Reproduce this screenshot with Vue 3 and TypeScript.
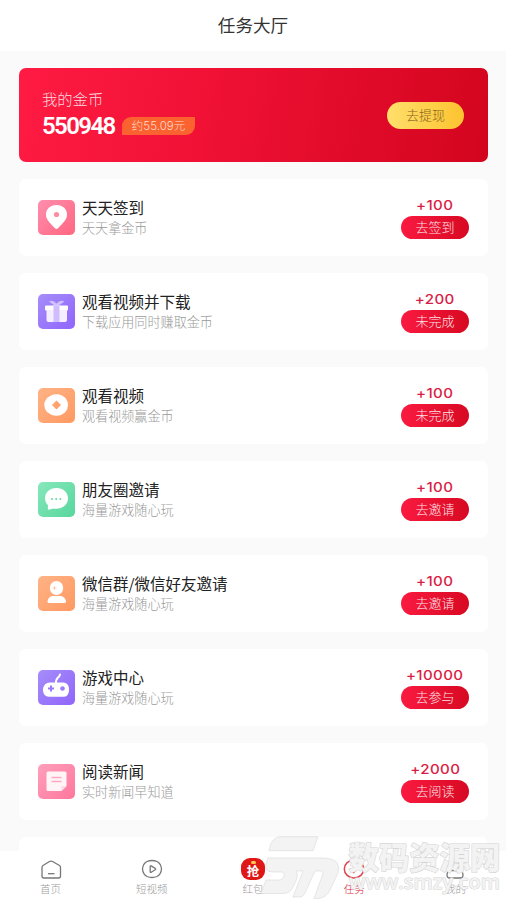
<script setup lang="ts">
interface Task {
  title: string
  desc: string
  reward: string
  action: string
  icon: 'pin' | 'gift' | 'coin' | 'chat' | 'user' | 'game' | 'news'
  tone: 'pink' | 'purple' | 'orange' | 'green' | 'rose'
}

const tasks: Task[] = [
  { title: '天天签到', desc: '天天拿金币', reward: '+100', action: '去签到', icon: 'pin', tone: 'pink' },
  { title: '观看视频并下载', desc: '下载应用同时赚取金币', reward: '+200', action: '未完成', icon: 'gift', tone: 'purple' },
  { title: '观看视频', desc: '观看视频赢金币', reward: '+100', action: '未完成', icon: 'coin', tone: 'orange' },
  { title: '朋友圈邀请', desc: '海量游戏随心玩', reward: '+100', action: '去邀请', icon: 'chat', tone: 'green' },
  { title: '微信群/微信好友邀请', desc: '海量游戏随心玩', reward: '+100', action: '去邀请', icon: 'user', tone: 'orange' },
  { title: '游戏中心', desc: '海量游戏随心玩', reward: '+10000', action: '去参与', icon: 'game', tone: 'purple' },
  { title: '阅读新闻', desc: '实时新闻早知道', reward: '+2000', action: '去阅读', icon: 'news', tone: 'rose' },
]
</script>

<template>
  <div class="page">
    <header class="header">任务大厅</header>

    <main class="content">
      <section class="wallet">
        <div>
          <div class="wallet-label">我的金币</div>
          <div class="wallet-row">
            <span class="balance">550948</span>
            <span class="approx">约55.09元</span>
          </div>
        </div>
        <button class="withdraw">去提现</button>
      </section>

      <article v-for="t in tasks" :key="t.title" class="card">
        <div class="icon" :class="t.tone">
          <svg viewBox="0 0 37 35" width="37" height="35">
            <template v-if="t.icon === 'pin'">
              <path d="M18.500 5C12 5 8 9.300 8 14.500c0 6 5.300 9.500 9 13.700q1.500 1.600 3 0c3.700-4.200 9-7.700 9-13.700C29 9.300 25 5 18.500 5z" fill="#fff" />
              <circle cx="18.500" cy="14.500" r="2.600" fill="#ff8ba0" />
            </template>
            <template v-else-if="t.icon === 'gift'">
              <path d="M17 12 11 7.500q4-2 7.500 2 3.500-4 8-2L20 12z" fill="#cfc0ff" />
              <rect x="7" y="11.500" width="23" height="5" rx="1" fill="#fff" />
              <path d="M8.500 16h20.500v10q0 2-2 2H10.500q-2 0-2-2z" fill="#f4eeff" />
              <path d="M15.500 11.500h6V28h-6z" fill="#d0bdff" />
            </template>
            <template v-else-if="t.icon === 'coin'">
              <path d="M13 7.500Q18.500 5 24 7.500l3.500 2.500q5 7 0 14L24 26.500q-5.500 2.500-11 0L9 24q-5.500-7 0-14z" fill="#fff" />
              <path d="m18.500 12.500 4.500 4.500-4.500 4.500L14 17z" fill="#ffa26d" />
            </template>
            <template v-else-if="t.icon === 'chat'">
              <path d="M18.500 6C11.700 6 7 10.500 7 16.300c0 3 1.300 5.200 3 7l-.2 3.500q.2 1 1.500.8l4.200-1C23.500 28 30 23 30 16.300 30 10.500 25.300 6 18.500 6z" fill="#fff" />
              <g fill="#62d9a8"><circle cx="14" cy="17" r="1" /><circle cx="18.200" cy="17" r="1" /><circle cx="22.400" cy="17" r="1" /></g>
            </template>
            <template v-else-if="t.icon === 'user'">
              <ellipse cx="18.500" cy="12" rx="6.700" ry="7" fill="#fff" />
              <path d="M14 20h9q4.500 1.200 5 5.500 0 1.500-2 1.500H11.500q-2 0-2-1.500 .5-4.300 4.500-5.500z" fill="#fff" />
              <path d="M14.800 12h3.400M16.500 10.300v3.400" stroke="#ffc7a4" />
            </template>
            <template v-else-if="t.icon === 'game'">
              <path d="M18 14q-.5-4 2-6.500 1.500-1 2-3" fill="none" stroke="#fff" stroke-width="2" stroke-linecap="round" />
              <path d="M12 12.500h13c4 0 6 3 6 7s-1.500 7.200-5 7.200H11c-4 0-6-3-6-7s3-7.200 7-7.200z" fill="#fff" />
              <path d="M10 18.500h6M13 15.500v6" stroke="#9b7cf9" stroke-width="2" />
              <circle cx="24.500" cy="18.500" r="2.300" fill="#9b7cf9" />
            </template>
            <template v-else>
              <path d="M10 7.500h17q1.500 0 1.500 1.500v13l-5 5H10q-1.500 0-1.500-1.500V9q0-1.500 1.500-1.500z" fill="#fff5f7" />
              <path d="M13.500 13.500h10M13.500 17.500h10" stroke="#ffaac1" stroke-width="1.500" />
              <path d="M28.500 22h-4q-1 0-1 1v4z" fill="#ffdce5" />
            </template>
          </svg>
        </div>
        <div class="info">
          <h2>{{ t.title }}</h2>
          <p>{{ t.desc }}</p>
        </div>
        <div class="side">
          <span class="reward">{{ t.reward }}</span>
          <button class="action">{{ t.action }}</button>
        </div>
      </article>
      <article class="card"></article>
    </main>

    <nav class="tabs">
      <div class="tab">
        <svg viewBox="0 0 24 24" width="24" height="24" fill="none" stroke="#777" stroke-width="1.300">
          <path d="M4 7.500q-1 .6-1 2V18q0 2 2 2h14.500q2 0 2-2V9.500q0-1.400-1-2l-7-4q-1.500-.9-3 0z" /><path d="M9 15.700h6.500" />
        </svg>
        <span>首页</span>
      </div>
      <div class="tab">
        <svg viewBox="0 0 24 24" width="24" height="24" fill="none" stroke="#777" stroke-width="1.300" stroke-linejoin="round">
          <path d="M7 3.500q5-2 10 0 4 2 4.500 7.500-.5 5.500-4.500 7.500-5 2-10 0-4-2-4.500-7.500.5-5.500 4.500-7.500z" /><path d="M10.200 8.500q0-1 1-.6l4 2.500q.9.700 0 1.400l-4 2.500q-1 .5-1-.6z" />
        </svg>
        <span>短视频</span>
      </div>
      <div class="tab">
        <div class="packet"><i></i><b>抢</b></div>
        <span>红包</span>
      </div>
      <div class="tab active">
        <svg viewBox="0 0 24 24" width="24" height="24" fill="none" stroke="#df454d" stroke-width="1.500">
          <ellipse cx="12" cy="11" rx="9.700" ry="9" /><path d="m7.500 11 4 3.500 6-6" />
        </svg>
        <span>任务</span>
      </div>
      <div class="tab">
        <svg viewBox="0 0 24 24" width="24" height="24" fill="none" stroke="#777" stroke-width="1.300">
          <circle cx="12" cy="7" r="4.300" /><path d="M6.500 12.500h11q2.500 1 2.500 5-.3 2.500-2.500 2.500h-11Q4.300 20 4 17.500q0-4 2.500-5z" />
        </svg>
        <span>我的</span>
      </div>
    </nav>

    <svg class="watermark" viewBox="0 0 250 80" width="250" height="80">
      <g class="mark">
        <path d="M13 30.700Q15 16.700 25 16.700H62L57 30.700z" />
        <path d="M12 38H69Q86 39 82 53L74 70q-3 7-11 8.500h-5l9-25q.5-2.500-2-2.500h-6L49 73q-1.500 4-5 4h-7l10-26h-7q3 4 0 10l-3 6q-3 6.500-10 6.500H5l5-13.500h14q3 0 4-4 1-4-3-4H17Q7 52 10.500 42z" />
      </g>
      <text x="92.500" y="48.500" textLength="152" lengthAdjust="spacingAndGlyphs" class="wm-name">数码资源网</text>
      <text x="93" y="68.500" textLength="151" lengthAdjust="spacingAndGlyphs" class="wm-url">www.smzy.com</text>
    </svg>
  </div>
</template>

<style>
body { margin: 0; overflow: hidden; }
</style>

<style scoped>
* { box-sizing: border-box; }
.page {
  position: relative;
  width: 506px;
  height: 900px;
  overflow: hidden;
  display: flex;
  flex-direction: column;
  background: #fafafa;
  font-family: "Noto Sans CJK SC", sans-serif;
}
button { border: 0; padding: 0; font-family: inherit; }
.header {
  flex: none;
  height: 51px;
  line-height: 50px;
  text-align: center;
  background: #fff;
  color: #333;
  font-size: 17.6px;
}
.content {
  flex: 1;
  min-height: 0;
  overflow: hidden;
  padding: 17px 18px 0 19px;
  display: flex;
  flex-direction: column;
  gap: 17px;
}
.wallet {
  flex: none;
  height: 94px;
  border-radius: 7px;
  padding: 0 24px 0 23px;
  display: flex;
  align-items: center;
  justify-content: space-between;
  background: linear-gradient(100deg, #ff1b43, #f01135 40%, #d3051e);
}
.wallet-label { color: #ffd9de; font-size: 15.3px; line-height: 20px; font-weight: 300; }
.wallet-row { display: flex; align-items: center; gap: 7px; height: 34px; padding-top: 2px; }
.balance {
  width: 73px;
  color: #fff;
  font: 600 24px/30px Roboto, sans-serif;
  letter-spacing: -1.600px;
}
.approx {
  width: 73px;
  height: 18px;
  line-height: 18px;
  text-align: center;
  border-radius: 9px 0 9px 0;
  background: #fa6230;
  color: #ffdac8;
  font-family: Inter, "Noto Sans CJK SC", sans-serif;
  font-size: 11.5px;
  font-weight: 300;
}
.withdraw {
  width: 77px;
  height: 27px;
  border-radius: 14px;
  background: linear-gradient(90deg, #ffdf6c, #fdc32f);
  color: #8a6421;
  font-size: 13px;
  line-height: 26px;
  font-weight: 300;
}
.card {
  flex: none;
  height: 77px;
  border-radius: 7px;
  background: #fff;
  display: flex;
  align-items: center;
  padding: 2px 19px 0;
}
.icon { width: 37px; height: 35px; border-radius: 5px; overflow: hidden; margin-top: -3px; }
.icon svg { display: block; }
.pink { background: linear-gradient(135deg, #ff8eae, #ff6680); }
.rose { background: linear-gradient(135deg, #ff9fbd, #ff779b); }
.purple { background: linear-gradient(135deg, #a58df9, #9065fb); }
.orange { background: linear-gradient(135deg, #ffb386, #ff9961); }
.green { background: linear-gradient(135deg, #86e8bb, #58d69d); }
.info { flex: 1; margin-left: 7px; }
h2 { margin: 0; font-size: 15.5px; line-height: 20px; font-weight: 400; color: #222; }
p { margin: 1px 0 3px; font-size: 13.1px; line-height: 20px; font-weight: 300; color: #999; }
.side { width: 68px; display: flex; flex-direction: column; align-items: center; margin-top: -3px; }
.reward {
  color: #d91e46;
  font: 500 13.500px/18px Inter, sans-serif;
  letter-spacing: .3px;
  white-space: nowrap;
  transform: translateY(1px) scaleX(1.12);
}
.action {
  width: 68px;
  height: 23px;
  margin-top: 3px;
  border-radius: 12px;
  background: linear-gradient(90deg, #fa1a40, #d70922);
  color: #ffe3e6;
  font-size: 13px;
  line-height: 21px;
  padding-bottom: 2px;
  font-weight: 300;
}
.tabs { flex: none; height: 49px; background: #fff; display: flex; }
.tab { flex: 1; display: flex; flex-direction: column; align-items: center; padding-top: 7px; color: #999; }
.tab > svg { flex: none; }
.tab span { font-size: 10.5px; line-height: 14px; font-weight: 300; }
.tab.active { color: #d51c35; }
.packet {
  width: 24px;
  height: 22px;
  margin-bottom: 2px;
  border-radius: 9px;
  background: #df1717;
  display: flex;
  flex-direction: column;
  align-items: center;
}
.packet i { width: 5px; height: 3px; margin-top: 3px; border-radius: 2px; background: #ffc54c; }
.packet b { color: #fff; font-size: 12.5px; line-height: 13px; font-weight: 700; }
.watermark { position: absolute; left: 256px; top: 820px; }
.mark path { fill: #f3f3f3; fill-opacity: .96; stroke: #d8d8d8; stroke-width: .6; }
.wm-name, .wm-url { fill: #f3f3f3; stroke: #d4d4d4; paint-order: stroke fill; stroke-linejoin: round; }
.wm-name { font-size: 31px; font-weight: 900; stroke-width: 1.2; }
.wm-url { font: 600 20px "Open Sans", sans-serif; stroke-width: 1; }
</style>
